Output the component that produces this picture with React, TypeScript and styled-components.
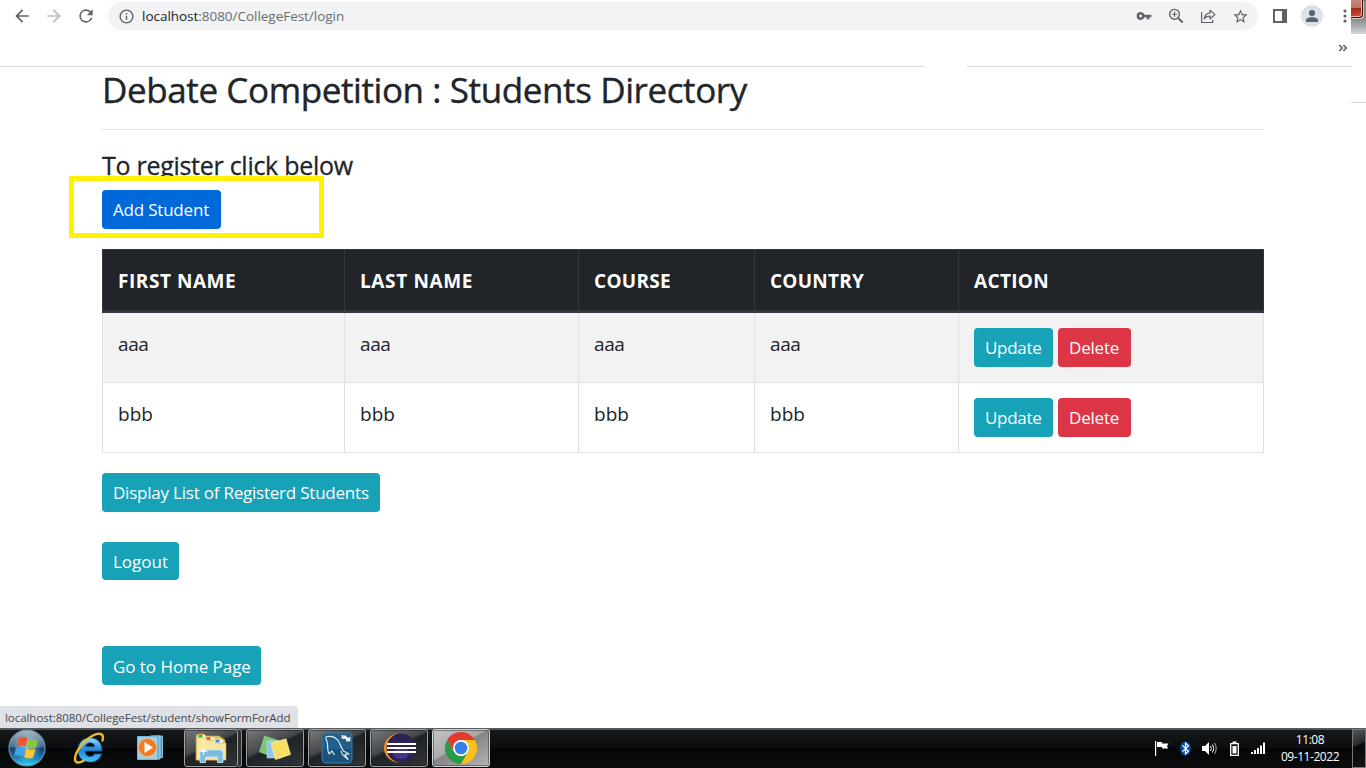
import React from 'react';
import styled, { createGlobalStyle, css } from 'styled-components';

const Global = createGlobalStyle`
  * { box-sizing: border-box; }
  html, body { margin: 0; background: #fff; }
  body { width: 1366px; height: 768px; overflow: hidden; font-family: "Open Sans", "Noto Sans", sans-serif; color: #212529; }
  svg { display: block; flex: none; }
`;

const Screen = styled.div`
  display: flex;
  flex-direction: column;
  width: 1366px;
  height: 768px;
  position: relative;
  overflow: hidden;
`;

/* ---------- Browser chrome ---------- */
const Top = styled.header`
  display: flex;
  height: 67px;
  flex: none;
`;
const BrowserBar = styled.div`
  width: 1351px;
  display: flex;
  flex-direction: column;
`;
const Toolbar = styled.div`
  height: 32px;
  display: flex;
  align-items: center;
`;
const NavIcons = styled.div`
  display: flex;
  width: 108px;
  padding-left: 12px;
  gap: 12px;
`;
const Omnibox = styled.div`
  width: 1150px;
  height: 28px;
  padding: 0 8px 0 10px;
  display: flex;
  align-items: center;
  background: #f1f3f4;
  border-radius: 14px;
`;
const Url = styled.span`
  margin-left: 7px;
  flex: 1;
  font-size: 13.5px;
  line-height: 20px;
  color: #696d71;
  white-space: nowrap;
  letter-spacing: -0.03px;
`;
const UrlHost = styled.span`
  color: #202124;
`;
const OmniActions = styled.div`
  display: flex;
  gap: 12px;
`;
const IconSlot = styled.div`
  width: 20px;
  height: 20px;
  display: flex;
  align-items: center;
  justify-content: center;
`;
const ToolActions = styled.div`
  display: flex;
  align-items: center;
  width: 93px;
  padding-left: 12px;
  gap: 11px;
  overflow: hidden;
`;
const Avatar = styled.div`
  width: 22px;
  height: 22px;
  border-radius: 50%;
  background: #dee1e6;
  display: flex;
  align-items: center;
  justify-content: center;
  flex: none;
`;
const Bookmarks = styled.div`
  flex: 1;
  display: flex;
  justify-content: flex-end;
  padding: 11px 3px 0 0;
`;
const Rules = styled.div`
  display: flex;
  gap: 43px;
`;
const Rule = styled.div<{ $w: number }>`
  width: ${p => p.$w}px;
  height: 1px;
  background: #d9dadc;
`;
const Edge = styled.div`
  width: 15px;
  height: 103px;
  border-bottom: 1px solid #d5d6d8;
`;
const EdgeGlass = styled.div`
  height: 34px;
  background: linear-gradient(#808080 0, #8a8a89 55%, #a7aaac 75%, #d3dade 100%);
`;
const CloseCorner = styled.div`
  width: 12px;
  height: 18px;
  border: 1px solid #401512;
  border-width: 0 1px 1px 0;
  border-radius: 0 0 4px 0;
  box-shadow: inset -1px -1px 0 #eeb3a3, 1px 1px 0 #c9c9c9;
  background: linear-gradient(#c5897c 0, #bd6f5f 45%, #a52a17 50%, #cc4a30 100%);
`;

/* ---------- Page ---------- */
const Page = styled.main`
  flex: 1;
  display: flex;
  flex-direction: column;
  align-items: flex-start;
  padding: 0 102px;
  position: relative;
`;
const Title = styled.h1`
  margin: 0;
  height: 62px;
  width: 100%;
  font-size: 35px;
  font-weight: 400;
  line-height: 45px;
  letter-spacing: -0.4px;
  white-space: nowrap;
  -webkit-text-stroke: 0.4px #212529;
`;
const Divider = styled.div`
  height: 1px;
  width: 1162px;
  background: #e5e5e6;
`;
const Subtitle = styled.h2`
  margin: 0;
  height: 60px;
  padding-top: 18px;
  font-size: 25px;
  font-weight: 400;
  line-height: 34px;
  letter-spacing: -0.28px;
  white-space: nowrap;
  -webkit-text-stroke: 0.3px #212529;
`;
const Highlight = styled.div`
  position: absolute;
  left: 69px;
  top: 109px;
  width: 255px;
  height: 62px;
  border: 5px solid #fff200;
  background: #fff;
`;
const Button = styled.button<{ $tone: 'primary' | 'info' | 'danger'; $w: number; $h?: number; $gapTop?: number; $track?: number; $drop?: number }>`
  position: relative;
  display: flex;
  flex: none;
  align-items: center;
  width: ${p => p.$w}px;
  height: ${p => p.$h ?? 39}px;
  margin: ${p => p.$gapTop ?? 0}px 0 0;
  padding: ${p => p.$drop ?? 0}px 0 0 11px;
  border: 0;
  border-radius: 4px;
  background: ${p => ({ primary: '#0069d9', info: '#17a2b8', danger: '#dc3545' })[p.$tone]};
  color: #fff;
  font: 17px/24px "Open Sans", sans-serif;
  letter-spacing: ${p => p.$track ?? -0.2}px;
  white-space: nowrap;
`;
const Table = styled.table`
  margin: 20px 0;
  width: 1162px;
  border-collapse: separate;
  border-spacing: 0;
  table-layout: fixed;
`;
const cell = css`
  padding: 0 15px;
  font-size: 19px;
  line-height: 28px;
  white-space: nowrap;
`;
const Th = styled.th<{ $track: number }>`
  ${cell}
  height: 64px;
  padding-top: 2px;
  background: #212529;
  border: 1px solid #32383e;
  border-width: 1px 1px 3px 0;
  color: #fff;
  font-weight: 700;
  text-align: left;
  letter-spacing: ${p => p.$track}px;
  &:first-child { border-left-width: 1px; }
`;
const Row = styled.tr<{ $striped: boolean }>`
  background: ${p => (p.$striped ? '#f2f2f2' : '#fff')};
`;
const Td = styled.td<{ $track?: number }>`
  ${cell}
  height: 70px;
  padding-top: 17px;
  border: 1px solid #dee2e6;
  border-width: 0 1px 1px 0;
  vertical-align: top;
  letter-spacing: ${p => p.$track ?? 0}px;
  &:first-child { border-left-width: 1px; }
  &:last-child { padding-top: 15px; }
`;
const Actions = styled.div`
  display: flex;
  gap: 5px;
`;
const LinkStatus = styled.div`
  position: absolute;
  left: 0;
  top: 706px;
  width: 298px;
  height: 22px;
  padding-left: 5px;
  border-radius: 0 4px 0 0;
  background: #dee1e6;
  color: #45484c;
  font-size: 11.5px;
  line-height: 23px;
  letter-spacing: -0.05px;
  white-space: nowrap;
`;

/* ---------- Taskbar ---------- */
const Taskbar = styled.footer`
  height: 40px;
  flex: none;
  display: flex;
  background: linear-gradient(#26282a 0, #8b8d8f 1px, #15181a 2px, #0b0d0f 50%, #050607 51%, #0a0c0e 100%);
`;
const Pinned = styled.div`
  width: 184px;
  display: flex;
  align-items: center;
  padding-left: 8px;
`;
const PinSlot = styled.div<{ $ml: number }>`
  margin-left: ${p => p.$ml}px;
`;
const Tasks = styled.div`
  display: flex;
  gap: 4px;
  padding-top: 1px;
`;
const Task = styled.div<{ $w: number; $active?: boolean }>`
  width: ${p => p.$w}px;
  height: 38px;
  display: flex;
  align-items: center;
  justify-content: center;
  border: 1px solid ${p => (p.$active ? '#d4d4d4' : '#a2a5a7')};
  border-radius: 3px;
  box-shadow: inset 0 0 0 1px rgba(0, 0, 0, 0.35);
  background: ${p =>
    p.$active
      ? 'linear-gradient(150deg, #c5c5c5 0, #a8a8a8 45%, #858585 46%, #b4b4b4 100%)'
      : 'linear-gradient(155deg, #77797b 0, #45484a 42%, #202325 48%, #323537 100%)'};
`;
const StackEdge = styled.div`
  width: 4px;
  height: 38px;
  margin: 0 0 0 -4px;
  border: 1px solid #85888a;
  border-left: 0;
  border-radius: 0 3px 3px 0;
  background: #2c2f31;
`;
const Tray = styled.div`
  margin-left: auto;
  display: flex;
  align-items: center;
`;
const Clock = styled.div`
  width: 84px;
  margin-left: 0;
  color: #fff;
  font-size: 12px;
  line-height: 17px;
  letter-spacing: -0.45px;
  text-align: center;
`;
const ShowDesktop = styled.div`
  width: 14px;
  height: 39px;
  margin-top: 1px;
  border: 1px solid #76797b;
  background: linear-gradient(155deg, #55585a 0, #25282a 40%, #08090a 42%, #111315 100%);
`;

const Glyph = ({ d, s = 20, c = '#5f6368' }: { d: string; s?: number; c?: string }) => (
  <svg width={s} height={s} viewBox="0 0 24 24" fill={c}><path d={d} /></svg>
);

const BackIcon = () => <Glyph d="M20 11H7.83l5.59-5.59L12 4l-8 8 8 8 1.41-1.41L7.83 13H20z" />;
const ForwardIcon = () => <Glyph c="#babcbe" d="M12 4l-1.41 1.41L16.17 11H4v2h12.17l-5.58 5.59L12 20l8-8z" />;
const ReloadIcon = () => <Glyph d="M17.65 6.35A7.96 7.96 0 0 0 12 4a8 8 0 1 0 7.73 10h-2.08A6 6 0 1 1 12 6c1.66 0 3.14.69 4.22 1.78L13 11h7V4z" />;
const InfoIcon = () => <Glyph d="M11 7h2v2h-2zm0 4h2v6h-2zm1-9a10 10 0 1 0 0 20 10 10 0 0 0 0-20zm0 18a8 8 0 1 1 0-16 8 8 0 0 1 0 16z" s={17} />;
const KeyIcon = () => <Glyph d="M12.65 10A5.99 5.99 0 0 0 1 12a6 6 0 0 0 11.65 2H16v3h4v-3h3v-4H12.65zM7 14.2a2.2 2.2 0 1 1 0-4.4 2.2 2.2 0 0 1 0 4.4z" s={16} />;
const ZoomIcon = () => (
  <svg width="20" height="20" viewBox="0 0 20 20" fill="none" stroke="#5f6368" strokeWidth="1.4">
    <circle cx="8.500" cy="8.300" r="4.900" /><path d="M12.200 12l4.500 4.500" strokeWidth="1.900" /><path d="M6 8.300h5M8.500 5.800v5" strokeWidth="1.100" />
  </svg>
);
const ShareIcon = () => (
  <svg width="20" height="20" viewBox="0 0 20 20" fill="none" stroke="#5f6368" strokeWidth="1.2">
    <path d="M3.600 6v10.500h11v-2.800" /><path d="M12 4.300l5 4.300-5 4.200v-2.600c-2.700 0-4.500.9-5.800 2.700.4-3 2.300-5.600 5.800-6.100z" strokeLinejoin="round" />
  </svg>
);
const StarIcon = () => <Glyph s={17} d="M22 9.240l-7.190-.62L12 2 9.190 8.630 2 9.240l5.460 4.730L5.820 21 12 17.270 18.180 21l-1.630-7.030L22 9.240zM12 15.400l-3.760 2.270 1-4.280-3.320-2.880 4.380-.38L12 6.100l1.710 4.040 4.380.38-3.320 2.880 1 4.280L12 15.400z" />;
const PanelIcon = () => (
  <svg width="20" height="20" viewBox="0 0 20 20"><path fill="#5f6368" d="M3 3h14v14H3z" /><path fill="#fff" d="M5 5h7v10H5z" /></svg>
);
const PersonIcon = () => (
  <svg width="16" height="16" viewBox="0 0 16 16" fill="#56617a"><circle cx="8" cy="5" r="3" /><path d="M2 14v-1.700C2 10.400 5 9.200 8 9.200s6 1.200 6 3.100V14z" /></svg>
);
const MenuIcon = () => (
  <svg width="10" height="20" viewBox="0 0 10 20" fill="#5f6368"><circle cx="5" cy="5" r="1.600" /><circle cx="5" cy="10" r="1.600" /><circle cx="5" cy="15" r="1.600" /></svg>
);
const ChevronsIcon = () => (
  <svg width="10" height="10" viewBox="0 0 10 10" fill="none" stroke="#5f6368" strokeWidth="1.700"><path d="M1.300 2l2.900 3-2.900 3M5.400 2l2.900 3-2.900 3" /></svg>
);

const StartOrb = () => (
  <svg width="38" height="38" viewBox="0 0 38 38">
    <defs>
      <linearGradient id="orb" x1="0" y1="0" x2="0" y2="1"><stop offset="0" stopColor="#a9bac8" /><stop offset=".47" stopColor="#456f92" /><stop offset=".5" stopColor="#123f6c" /><stop offset=".75" stopColor="#1679b0" /><stop offset="1" stopColor="#35dcfa" /></linearGradient>
      <radialGradient id="halo"><stop offset="0" stopColor="#fff" stopOpacity=".6" /><stop offset="1" stopColor="#fff" stopOpacity="0" /></radialGradient>
    </defs>
    <circle cx="19" cy="19" r="18" fill="url(#orb)" stroke="#6d8ba2" strokeWidth="1.200" />
    <circle cx="19" cy="19" r="14" fill="url(#halo)" />
    <path fill="#f0562b" d="M10.500 9.500c3.200-2.400 6.200-2.200 9.100-.4l-2 8.700c-2.900-1.700-5.800-1.700-9.200.2z" />
    <path fill="#8bc53f" d="M20.800 9.900c2.700 1.800 5.800 1.700 9.200.1l-2.300 8.500c-3.200 1.800-6.100 1.600-8.900-.2z" />
    <path fill="#41a5e5" d="M8 19.300c3.300-2 6.200-1.900 9.100-.2l-2.200 8.300c-2.900-1.700-5.600-1.600-8.900.2z" />
    <path fill="#fdc82f" d="M18.400 19.700c2.700 1.600 5.700 1.700 9.100 0l-2.300 8.500c-3.200 1.800-6.100 1.600-9-.1z" />
  </svg>
);
const ExplorerE = () => (
  <svg width="34" height="34" viewBox="0 0 34 34">
    <defs><linearGradient id="ie" x1="0" y1="0" x2="0" y2="1"><stop offset="0" stopColor="#9adcfb" /><stop offset=".5" stopColor="#1c85d6" /><stop offset="1" stopColor="#47c5f6" /></linearGradient></defs>
    <path fill="url(#ie)" stroke="#12639f" strokeWidth=".7" d="M30 20H13c.3 3.700 2.300 5.500 5.100 5.500 2.200 0 3.600-1 4.300-2.600h7.100C28 28 23.700 31 18 31 10.500 31 6 26.300 6 19S11 7 18.200 7 30.300 12 30 20zM13.200 15.800h9.600c-.3-2.500-2-4-4.600-4s-4.400 1.500-5 4z" />
    <path fill="none" stroke="#edba2c" strokeWidth="2.400" strokeLinecap="round" d="M30.500 9.500C32.500 3 28 .8 21 4.500 11.500 9.500 2.500 21.500 3 28.500c.3 3.700 4 3.800 8.500 1.300" />
  </svg>
);
const MediaIcon = () => (
  <svg width="28" height="28" viewBox="0 0 28 28">
    <path fill="#4a94c0" stroke="#a5dcf2" strokeWidth=".8" d="M17 2h9.500v21.500H17z" /><path fill="#6ab1d6" stroke="#b5e4f5" strokeWidth=".8" d="M14 2h10v23H14z" />
    <path fill="#a3cfe4" stroke="#75b6d7" d="M1.500 2.500h20v23h-20z" />
    <circle cx="11.500" cy="13.500" r="9" fill="#f37a20" stroke="#fbb477" strokeWidth=".8" /><path fill="#fff" d="M8.500 8l8.500 5.500L8.500 19z" />
  </svg>
);
const FolderIcon = () => (
  <svg width="34" height="32" viewBox="0 0 34 32">
    <path fill="#eacb6c" stroke="#bb9840" strokeWidth=".7" d="M2 28V3.500L4 2h6l2 2h13l6 4v20z" />
    <path fill="#f8e7a1" stroke="#cead57" strokeWidth=".6" d="M2.500 6h9l2 2.500h5.500l2 2.500H32v17H2.500z" />
    <path fill="#fff" d="M4 3h7v2.500H4zM12 5.500h8V8h-8zM20 8h9v2.500h-9z" /><path fill="#19b33c" d="M4.500 3h4v2.300h-4z" /><path fill="#d94024" d="M12.500 5.400h4v2.300h-4z" /><path fill="#2c8de3" d="M21.500 8h4v2.300h-4z" />
    <path fill="#7dbce0" stroke="#b9e6f7" strokeWidth=".9" d="M6 30.500V20.500q0-2.500 2.500-2.500h18q2.500 0 2.500 2.500v10h-5.500V25h-12v5.500z" />
    <path fill="#fff" d="M9.500 14l.9 4.100 4.100.9-4.100.9-.9 4.100-.9-4.100-4.100-.9 4.100-.9z" />
  </svg>
);
const NotesIcon = () => (
  <svg width="34" height="28" viewBox="0 0 34 28">
    <path fill="#79c779" stroke="#a7e0a0" strokeWidth=".5" d="M6.500 2l15 5-5.500 16L1.500 18z" /><path fill="#8fc6ed" stroke="#c4e4fa" strokeWidth=".5" d="M9 7h14v17H9z" /><path fill="#f7df64" stroke="#fff3a5" strokeWidth=".7" d="M13 9l15-4 4.500 15.500-15 5z" />
  </svg>
);
const DolphinIcon = () => (
  <svg width="32" height="32" viewBox="0 0 32 32">
    <rect x="1" y="1" width="30" height="30" rx="4" fill="#225f8a" stroke="#347aa8" /><path fill="#18496f" d="M2 17h28v13H2z" opacity=".6" />
    <path fill="none" stroke="#d9edf7" strokeWidth="1.200" strokeLinejoin="round" d="M8 22c-2-4-1-7-1.500-10C6 8 3.500 5 6 4.500c3-.5 8 0 11 4 2.500 3.400 3 7.500 5.500 10.500l5.500 3-4 .5 3 5-5-4.500c-1 0-1-2-2-4M8 22l3-3 2.500 4" />
    <path fill="none" stroke="#fff" strokeWidth="2.400" d="M23 4l5 4.500" /><path fill="none" stroke="#fff" strokeWidth="1.700" d="M21.500 3v3h3M28.500 5v3.500H25" />
  </svg>
);
const EclipseIcon = () => (
  <svg width="34" height="32" viewBox="0 0 34 32">
    <path fill="#f7941e" d="M17 1C7 3 2 9 2 16s5 13.500 15 15C10 27 6 22.500 6 16S10 4 17 1z" /><circle cx="19" cy="16" r="14.500" fill="#2c2255" /><ellipse cx="19" cy="21" rx="8" ry="6" fill="#473788" />
    <path stroke="#fff" strokeWidth="2" d="M5 12h29M5 16h29M5 20h29" />
  </svg>
);
const ChromeIcon = () => (
  <svg width="34" height="34" viewBox="0 0 34 34">
    <path fill="#e33b2e" d="M3.140 9A16 16 0 0 1 30.860 9H17a8 8 0 0 0-6.930 12z" />
    <path fill="#269b48" d="M3.140 9A16 16 0 0 0 17 33l6.930-12a8 8 0 0 1-13.860 0z" />
    <path fill="#fbc116" d="M30.860 9A16 16 0 0 1 17 33l6.930-12A8 8 0 0 0 17 9z" />
    <circle cx="17" cy="17" r="8" fill="#fff" /><circle cx="17" cy="17" r="6.300" fill="#347fe5" />
  </svg>
);
const TrayIcons = () => (
  <svg width="114" height="20" viewBox="0 0 114 20" fill="#fff">
    <path d="M1 3h1.200v15H1zM3 4h5v1.500h6.500L13 8l1 2.500H8V9H3z" />
    <ellipse cx="31.500" cy="10.500" rx="5.300" ry="7" fill="#0b4ba0" /><path fill="none" stroke="#fff" strokeWidth="1.200" d="M28.500 7.300l6 6-3 2.700V5l3 2.700-6 6" />
    <path d="M48 8h3l4-4v13l-4-4h-3z" /><path fill="none" stroke="#fff" strokeWidth="1" d="M56.500 8q1.500 2.500 0 5M58.500 6.500q2.500 4 0 8" /><path fill="none" stroke="#b0b0b0" strokeWidth="1" d="M60.600 5q3.200 5.500 0 11" />
    <path fill="none" stroke="#fff" strokeWidth="1.300" d="M76.700 5.700h7.600v11.600h-7.600z" /><path d="M78.500 3.500h4v2h-4zM78.500 8h4v7.500h-4z" />
    <path d="M97 14h2v2h-2zM100 12h2v4h-2zM103 10h2v6h-2zM106 7.500h2V16h-2zM109 4.500h2V16h-2z" />
  </svg>
);

const columns: { label: string; width: number; track: number }[] = [
  { label: 'FIRST NAME', width: 243, track: 0.55 },
  { label: 'LAST NAME', width: 234, track: 0.63 },
  { label: 'COURSE', width: 176, track: 0.3 },
  { label: 'COUNTRY', width: 204, track: 0.25 },
  { label: 'ACTION', width: 305, track: 0.33 },
];
const students = [
  ['aaa', 'aaa', 'aaa', 'aaa'],
  ['bbb', 'bbb', 'bbb', 'bbb'],
];

export default function App() {
  return (
    <Screen>
      <Global />
      <Top>
        <BrowserBar>
          <Toolbar>
            <NavIcons><BackIcon /><ForwardIcon /><ReloadIcon /></NavIcons>
            <Omnibox>
              <InfoIcon />
              <Url><UrlHost>localhost</UrlHost>:8080/CollegeFest/login</Url>
              <OmniActions>
                <IconSlot><KeyIcon /></IconSlot><ZoomIcon /><ShareIcon /><IconSlot><StarIcon /></IconSlot>
              </OmniActions>
            </Omnibox>
            <ToolActions><PanelIcon /><Avatar><PersonIcon /></Avatar><PinSlot $ml={6}><MenuIcon /></PinSlot></ToolActions>
          </Toolbar>
          <Bookmarks><ChevronsIcon /></Bookmarks>
          <Rules><Rule $w={924} /><Rule $w={384} /></Rules>
        </BrowserBar>
        <Edge><EdgeGlass><CloseCorner /></EdgeGlass></Edge>
      </Top>

      <Page>
        <Title>Debate Competition : Students Directory</Title>
        <Divider />
        <Subtitle>To register click below</Subtitle>
        <Highlight />
        <Button $tone="primary" $w={119}>Add Student</Button>
        <Table>
          <colgroup>{columns.map(c => <col key={c.label} width={c.width} />)}</colgroup>
          <thead><tr>{columns.map(c => <Th key={c.label} $track={c.track}>{c.label}</Th>)}</tr></thead>
          <tbody>
            {students.map((s, i) => (
              <Row key={i} $striped={i % 2 === 0}>
                {s.map((v, j) => <Td key={j} $track={i === 0 ? -0.4 : 0.04}>{v}</Td>)}
                <Td>
                  <Actions>
                    <Button $tone="info" $w={79} $track={-0.3}>Update</Button>
                    <Button $tone="danger" $w={73}>Delete</Button>
                  </Actions>
                </Td>
              </Row>
            ))}
          </tbody>
        </Table>
        <Button $tone="info" $w={278} $track={-0.22}>Display List of Registerd Students</Button>
        <Button $tone="info" $w={77} $h={38} $gapTop={30} $track={0} $drop={2}>Logout</Button>
        <Button $tone="info" $w={159} $gapTop={66} $track={-0.05} $drop={2}>Go to Home Page</Button>
      </Page>

      <LinkStatus>localhost:8080/CollegeFest/student/showFormForAdd</LinkStatus>

      <Taskbar>
        <Pinned>
          <StartOrb />
          <PinSlot $ml={26}><ExplorerE /></PinSlot>
          <PinSlot $ml={30}><MediaIcon /></PinSlot>
        </Pinned>
        <Tasks>
          <Task $w={54}><FolderIcon /></Task>
          <StackEdge />
          <Task $w={58}><NotesIcon /></Task>
          <Task $w={58}><DolphinIcon /></Task>
          <Task $w={58}><EclipseIcon /></Task>
          <Task $w={58} $active><ChromeIcon /></Task>
        </Tasks>
        <Tray>
          <TrayIcons />
          <Clock>11:08<br />09-11-2022</Clock>
          <ShowDesktop />
        </Tray>
      </Taskbar>
    </Screen>
  );
}
